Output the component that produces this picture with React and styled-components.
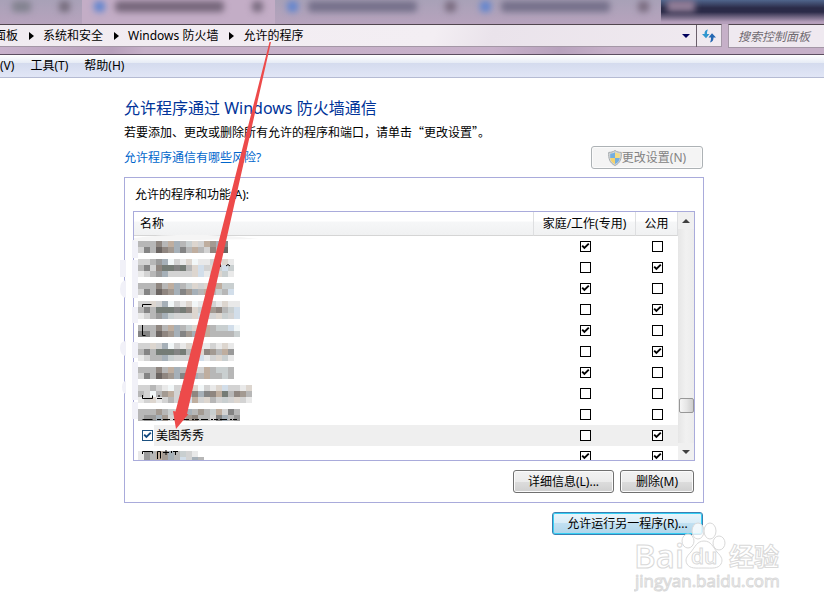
import React, { useState } from 'react';
import styled, { createGlobalStyle } from 'styled-components';

const GlobalStyle = createGlobalStyle`
  * {
    box-sizing: border-box;
  }

  body {
    margin: 0;
    background: #ffffff;
    color: #000000;
    font-family: 'Noto Sans', 'Noto Sans CJK SC', sans-serif;
    font-size: 12px;
    line-height: 18px;
  }

  button,
  input {
    font: inherit;
  }
`;

const Page = styled.div`
  position: relative;
  min-height: 100vh;
  overflow: hidden;
`;

const TabStrip = styled.div`
  display: flex;
  height: 24px;
  overflow: hidden;
  background: linear-gradient(#50658c 0, #2b2b48 8px, #2b2b48 12px, #b59fbb 22px);
`;

const BrowserTab = styled.div`
  display: flex;
  flex: none;
  align-items: center;
  width: ${(props) => (props.$first ? '82px' : '193px')};
  height: 24px;
  padding: 0 12px 12px;
  gap: 10px;
  background: linear-gradient(
    ${(props) => (props.$active ? '#c3adc6' : '#a8a1b7')},
    ${(props) => (props.$active ? '#c3adc6' : '#b7a3bd')}
  );
`;

const Smear = styled.span`
  flex: ${(props) => (props.$grow ? '1' : 'none')};
  width: 11px;
  height: 11px;
  margin-right: ${(props) => (props.$grow ? '18px' : '0')};
  border-radius: 4px;
  background: ${(props) => props.$color};
  filter: blur(3px);
`;

const NewTab = styled.div`
  width: 28px;
  height: 12px;
  margin-left: 6px;
  background: #927e98;
  filter: blur(3px);
`;

const AddressRow = styled.header`
  display: flex;
  gap: 6px;
  height: 31px;
  padding-bottom: 7px;
  border-bottom: 1px solid #5c4e60;
  background: linear-gradient(100deg, #c9b2cc 0, #b7a0bb 14%, #c6b0c8 18%, #c8b1ca 60%, #b8a2bd 68%, #c6b0c8 74%);
`;

const AddressBar = styled.nav`
  display: flex;
  flex: 1;
  align-items: center;
  border: 1px solid #a497a6;
  border-top-color: #51464f;
  border-left: none;
  background: linear-gradient(110deg, #f1ebf1, #f3eef3 60%, #eae3eb 68%, #f0eaf0);
`;

const Crumbs = styled.ol`
  display: flex;
  flex: 1;
  align-items: center;
  margin: 0 0 0 -6px;
  padding: 0;
  list-style: none;
`;

const Crumb = styled.li`
  display: flex;
  align-items: center;
  white-space: nowrap;

  & + &::before {
    content: '';
    margin: 0 9px 0 11px;
    border: 4px solid transparent;
    border-left: 5px solid #000000;
    border-right: none;
  }
`;

const CrumbLink = styled.a`
  color: #000000;
  text-decoration: none;
`;

const HistoryButton = styled.button`
  display: flex;
  align-items: center;
  justify-content: center;
  width: 20px;
  height: 22px;
  padding: 0;
  border: none;
  background: transparent;
`;

const RefreshButton = styled(HistoryButton)`
  width: 25px;
  border-left: 1px solid #6b5f6b;
`;

const SearchBox = styled.input`
  width: 96px;
  height: 24px;
  padding: 0 9px;
  border: 1px solid #a497a6;
  border-top-color: #51464f;
  border-right: none;
  border-radius: 0;
  background: #efe9f0;
  font-style: italic;

  &::placeholder {
    color: #6f6a70;
    opacity: 1;
  }
`;

const MenuBar = styled.nav`
  display: flex;
  gap: 16px;
  height: 23px;
  align-items: center;
  border-bottom: 1px solid #b5bbd3;
  background: linear-gradient(#ffffff 0, #e6ebf5 8px, #d4dbee 8px, #e1e6f6 22px);
`;

const MenuItem = styled.button`
  padding: 0;
  border: none;
  background: transparent;
  color: #000000;
`;

const Content = styled.main`
  position: relative;
  padding: 18px 120px 0 124px;
`;

const Title = styled.h1`
  margin: 0;
  color: #003399;
  font-size: 16px;
  font-weight: 400;
  line-height: 24px;
`;

const Description = styled.p`
  margin: 3px 0 5px;
  font-family: 'Noto Sans CJK SC', sans-serif;
`;

const HelpRow = styled.div`
  display: flex;
  align-items: center;
  justify-content: space-between;
  margin-bottom: 8px;
  padding-right: 1px;
`;

const HelpLink = styled.a`
  color: #0066cc;
  text-decoration: none;
`;

const Button = styled.button`
  display: flex;
  align-items: center;
  justify-content: center;
  width: ${(props) => props.$width};
  height: 23px;
  padding: 0;
  border: 1px solid #707070;
  border-radius: 3px;
  background: linear-gradient(#f2f2f2 0, #ebebeb 50%, #dddddd 50%, #cfcfcf 100%);
  box-shadow: inset 0 0 0 1px #fbfbfb;
  color: #000000;
  white-space: nowrap;

  &:disabled {
    border-color: #adb2b5;
    background: #f4f4f4;
    color: #838383;
  }
`;

const DefaultButton = styled(Button)`
  border-color: #3c7fb1;
  background: linear-gradient(#eaf5fb 0, #d8ecf7 50%, #c1e0f1 50%, #b0d6eb 100%);
  box-shadow: inset 0 0 0 1px #35d0f5;
`;

const Panel = styled.section`
  padding: 8px 8px 9px;
  border: 1px solid #a9abdb;
`;

const PanelLabel = styled.div`
  margin-bottom: 7px;
  padding-left: 2px;
`;

const ListBox = styled.div`
  display: flex;
  height: 250px;
  overflow: hidden;
  border: 1px solid #a9abdb;
`;

const ProgramTable = styled.table`
  flex: 1;
  width: 0;
  table-layout: fixed;
  border-collapse: separate;
  border-spacing: 0;
`;

const HeaderCell = styled.th`
  width: ${(props) => props.$width || 'auto'};
  height: 24px;
  padding: ${(props) => (props.$width ? '0' : '0 6px')};
  border-right: 1px solid #dedfe1;
  border-bottom: 1px solid #d5d5d5;
  background: linear-gradient(#ffffff 0, #ffffff 9px, #f6f7f8 10px, #f0f1f2 100%);
  font-weight: 400;
  text-align: ${(props) => (props.$width ? 'center' : 'left')};
  white-space: nowrap;
`;

const Cell = styled.td`
  height: 21px;
  padding: 0;
  background: ${(props) => (props.$selected ? '#efefef' : 'transparent')};
  line-height: 0;
  text-align: center;
`;

const NameCell = styled.div`
  display: flex;
  align-items: center;
  height: 21px;
  padding-left: ${(props) => (props.$masked ? '4px' : '8px')};
  gap: 1px;
`;

const NameLabel = styled.label`
  flex: 1;
  padding-left: 2px;
  background: #efefef;
  line-height: 21px;
  text-align: left;
`;

const CheckBox = styled.input`
  appearance: none;
  width: 11px;
  height: 11px;
  margin: 0;
  border: 1px solid ${(props) => props.$color || '#000000'};
  background: #ffffff;
  vertical-align: top;

  &:checked {
    background: #ffffff
      url("data:image/svg+xml,%3Csvg xmlns='http://www.w3.org/2000/svg' viewBox='0 0 9 9'%3E%3Cpath d='M1.2 3.6 3.4 6 7.8 1.6' fill='none' stroke='${(props) =>
        props.$color ? '%23134a80' : '%23000'}' stroke-width='1.9'/%3E%3C/svg%3E");
  }
`;

const ScrollBar = styled.div`
  display: flex;
  flex-direction: column;
  align-items: center;
  width: 16px;
  background: linear-gradient(90deg, #e6e6e6, #f1f1f1 50%, #ececec);
`;

const ScrollButton = styled.button`
  display: flex;
  align-items: center;
  justify-content: center;
  width: 16px;
  height: 17px;
  padding: 0;
  border: none;
  background: #f0f0f0;
`;

const ScrollSpace = styled.div`
  flex: ${(props) => props.$part};
`;

const ScrollThumb = styled.div`
  width: 15px;
  height: 15px;
  border: 1px solid #979797;
  border-radius: 2px;
  background: linear-gradient(90deg, #f6f6f6, #e6e6e6 50%, #cdcdcd);
`;

const ButtonRow = styled.div`
  display: flex;
  justify-content: flex-end;
  gap: 6px;
  margin-top: 9px;
  padding-right: 1px;
`;

const Annotation = styled.svg`
  position: absolute;
  top: -38px;
  left: 0;
  pointer-events: none;
`;

const Watermark = styled.svg`
  position: absolute;
  top: 443px;
  right: 40px;
  pointer-events: none;
`;

// one letter per 6px block
const blockColors = {
  a: '#d3d3d3',
  b: '#b7b7b7',
  c: '#848484',
  d: '#6b6562',
  e: '#9a9a9a',
  f: '#a6b0b8',
  g: '#bfae9f',
  h: '#ddd6cf',
  i: '#d2deea',
  j: '#757c76',
  k: '#8f8680',
  l: '#c9cfd0',
  m: '#f2f7f8',
  n: '#e9e9e9',
  o: '#a39a92',
};

const programs = [
  { mosaic: ['bbbkbgfblhagofc', 'acbdkofcbgbakbd'], home: true, pub: false },
  { mosaic: ['aabefmanhmnnanhn', 'bcakjjcjbhiahlil', 'nabefaaaahinahln'], home: false, pub: true },
  { mosaic: ['bbbkbgfblhahbgll', 'acbdkofcofbgblbi'], home: true, pub: false },
  { mosaic: ['aahafmanhmnnanhnn', 'bcbjjjcjkhlbokbli', 'nabeflaaahiaahlai'], home: false, pub: true },
  { mosaic: ['bbbkbgfblhagbllim', 'ccbdkofcofbgbbbbl'], home: true, pub: false },
  { mosaic: ['aahafmanhmnnanhn', 'bcbjjjcjblhkobge', 'nabbflaaahinahln'], home: false, pub: true },
  { mosaic: ['bbbkbgfblhagbllb', 'acbdkofcofbgbblb'], home: true, pub: false },
  { mosaic: ['aabanmahnhmanhiaanh', 'bambogaofkfckgjbkob', 'nahnabaaigahbalahan'], home: false, pub: false },
  { mosaic: ['bbboblagfboblgacb', 'beefoabbokbbacfbe'], home: false, pub: false },
  { name: '美图秀秀', home: false, pub: true, selected: true },
  { mosaic: ['nebgofblan', 'nebgofbiafb'], home: true, pub: true },
];

const menus = ['(V)', '工具(T)', '帮助(H)'];
const crumbs = ['面板', '系统和安全', 'Windows 防火墙', '允许的程序'];

const Mosaic = ({ rows }) => {
  const width = Math.max(...rows.map((row) => row.length)) * 6;
  return (
    <svg width={width} height={rows.length * 6} shapeRendering="crispEdges" aria-hidden="true">
      {rows.map((row, y) =>
        row
          .split('')
          .map((key, x) => (
            <rect key={`${x}-${y}`} x={x * 6} y={y * 6} width="6" height="6" fill={blockColors[key]} />
          ))
      )}
    </svg>
  );
};

const Shield = () => (
  <svg width="14" height="16" viewBox="0 0 14 16" aria-hidden="true">
    <path d="M7 .5C5 2 3 2.300.7 2.400.3 8 1.500 13 7 15.500 12.500 13 13.700 8 13.300 2.400 11 2.300 9 2 7 .5Z" fill="#d5d8da" stroke="#a5abae" />
    <path d="M7 2.200C5.500 3.200 4 3.600 2.200 3.700V8H7Z" fill="#74aee0" />
    <path d="M7 2.200c1.500 1 3 1.400 4.800 1.500V8H7Z" fill="#f5dc83" />
    <path d="M2.200 8c.4 2.900 2 4.800 4.800 6V8Z" fill="#f5d36c" />
    <path d="M11.800 8c-.4 2.900-2 4.800-4.800 6V8Z" fill="#74aee0" />
  </svg>
);

const RefreshIcon = () => (
  <svg width="16" height="14" viewBox="0 0 16 14" aria-hidden="true">
    <path d="M7 .5C4.300.8 3.500 2.500 3.500 5H1l4 4.300L8.500 5H6c0-2 .2-3.300 1-4.500Z" fill="#3196cf" />
    <path d="M9 13.500c2.700-.5 3.500-2.500 3.500-5H15L11 4.200 7.500 8.500H10c0 2-.2 3.500-1 5Z" fill="#2467b2" />
  </svg>
);

const Triangle = ({ up, color = '#404040' }) => (
  <svg width="8" height="4" viewBox="0 0 8 4" aria-hidden="true">
    <path d={up ? 'M0 4 4 0l4 4Z' : 'M0 0h8L4 4Z'} fill={color} />
  </svg>
);

const App = () => {
  const [rows, setRows] = useState(programs);

  const toggle = (index, field) => {
    setRows((prev) =>
      prev.map((row, i) => (i === index ? { ...row, [field]: !row[field] } : row))
    );
  };

  return (
    <Page>
      <GlobalStyle />
      <TabStrip aria-hidden="true">
        <BrowserTab $first>
          <Smear $grow $color="#82828f" />
          <Smear $color="#756c7c" />
        </BrowserTab>
        {[true, false, false].map((active, i) => (
          <BrowserTab key={i} $active={active}>
            <Smear $color="#6285cf" />
            <Smear $grow $color={active ? '#75667a' : '#75708a'} />
            <Smear $color="#796b7f" />
          </BrowserTab>
        ))}
        <NewTab />
      </TabStrip>
      <AddressRow>
        <AddressBar>
          <Crumbs>
            {crumbs.map((crumb) => (
              <Crumb key={crumb}>
                <CrumbLink href="#">{crumb}</CrumbLink>
              </Crumb>
            ))}
          </Crumbs>
          <HistoryButton type="button" aria-label="历史记录">
            <Triangle color="#00005c" />
          </HistoryButton>
          <RefreshButton type="button" aria-label="刷新">
            <RefreshIcon />
          </RefreshButton>
        </AddressBar>
        <SearchBox type="text" aria-label="搜索控制面板" placeholder="搜索控制面板" />
      </AddressRow>
      <MenuBar>
        {menus.map((menu) => (
          <MenuItem type="button" key={menu}>
            {menu}
          </MenuItem>
        ))}
      </MenuBar>

      <Content>
        <Title>允许程序通过 Windows 防火墙通信</Title>
        <Description>若要添加、更改或删除所有允许的程序和端口，请单击“更改设置”。</Description>
        <HelpRow>
          <HelpLink href="#">允许程序通信有哪些风险?</HelpLink>
          <Button type="button" $width="112px" disabled>
            <Shield />
            <span>更改设置(N)</span>
          </Button>
        </HelpRow>

        <Panel>
          <PanelLabel id="programs-label">允许的程序和功能(A):</PanelLabel>
          <ListBox>
            <ProgramTable aria-labelledby="programs-label">
              <thead>
                <tr>
                  <HeaderCell>名称</HeaderCell>
                  <HeaderCell $width="102px">家庭/工作(专用)</HeaderCell>
                  <HeaderCell $width="42px">公用</HeaderCell>
                </tr>
              </thead>
              <tbody>
                {rows.map((row, i) => (
                  <tr key={i}>
                    <Cell>
                      <NameCell $masked={!row.name}>
                        {row.name ? (
                          <>
                            <CheckBox type="checkbox" id={`program-${i}`} $color="#1c5180" defaultChecked />
                            <NameLabel htmlFor={`program-${i}`}>{row.name}</NameLabel>
                          </>
                        ) : (
                          <Mosaic rows={row.mosaic} />
                        )}
                      </NameCell>
                    </Cell>
                    <Cell $selected={row.selected}>
                      <CheckBox
                        type="checkbox"
                        aria-label="家庭/工作(专用)"
                        checked={row.home}
                        onChange={() => toggle(i, 'home')}
                      />
                    </Cell>
                    <Cell $selected={row.selected}>
                      <CheckBox
                        type="checkbox"
                        aria-label="公用"
                        checked={row.pub}
                        onChange={() => toggle(i, 'pub')}
                      />
                    </Cell>
                  </tr>
                ))}
              </tbody>
            </ProgramTable>
            <ScrollBar>
              <ScrollButton type="button" aria-label="向上">
                <Triangle up />
              </ScrollButton>
              <ScrollSpace $part={169} />
              <ScrollThumb />
              <ScrollSpace $part={30} />
              <ScrollButton type="button" aria-label="向下">
                <Triangle />
              </ScrollButton>
            </ScrollBar>
          </ListBox>
          <ButtonRow>
            <Button type="button" $width="101px">详细信息(L)...</Button>
            <Button type="button" $width="74px">删除(M)</Button>
          </ButtonRow>
        </Panel>
        <ButtonRow>
          <DefaultButton type="button" $width="151px">允许运行另一程序(R)...</DefaultButton>
        </ButtonRow>

        {/* brush marks beside the names, bits of the masked rows and the red pointer */}
        <Annotation width="300" height="440" viewBox="0 40 300 440" aria-hidden="true">
          <g fill="#f1f1f8">
            <path d="M132 240h6v18h-6ZM132 260h6v38h-6ZM132 307h6v16h-6ZM132 342h6v16h-6ZM132 362h6v38h-6ZM132 402h6v17h-6Z" />
            <path d="M120 260h6v17h-6ZM126 280v18q-6-1-6-9t6-9ZM126 341v15q-6-1-6-8t6-7ZM126 381v13q-4-1-4-7t4-6Z" />
            <path d="M134 238q60-7 125 1l-125 2Z" fill="#f5f5f5" />
          </g>
          <g fill="none" stroke="#000000">
            <path d="M142.500 307v-2.500h9M142.500 325v10.500h3M142.500 395v3.500h10v-3M142.500 419.500h10M142.500 454v-2.500h10v2" />
            <path d="M157 398.500h5M159 395v2" />
            <path d="M157 419.500h80" strokeDasharray="4 2 7 3 2 1" />
            <path d="M157.500 459v-7.500h3v7M163 452.500h6M166 450v5M171.500 451v2M173 451.500h5M175.500 451v4" />
            <path d="M220.500 264v3M226 266q2-3 4 0" />
          </g>
          <path d="M269.500 42h1.500L187 414h1.500L176 429 173 411l2.500.5Z" fill="#ed4a4a" />
        </Annotation>

        <Watermark width="150" height="76" viewBox="0 0 150 76" aria-hidden="true">
          <g fill="#ffffff" fillOpacity="0.8" stroke="#d9d9d9" strokeWidth="1" fontFamily="'Open Sans', 'Noto Sans CJK SC', sans-serif">
            <ellipse cx="54" cy="20" rx="6" ry="7" />
            <ellipse cx="64" cy="10" rx="6" ry="8" />
            <ellipse cx="76" cy="10" rx="6" ry="8" />
            <ellipse cx="85" cy="22" rx="6" ry="7" />
            <path d="M70 20c7 0 9 6 13 11 5 5 6 8 4 12-3 5-9 4-17 4s-14 1-17-4c-2-4-1-7 4-12 4-5 6-11 13-11Z" />
            <text x="0" y="47" fontSize="33" fontWeight="600">Bai</text>
            <text x="57" y="43" fontSize="21" fontWeight="600">du</text>
            <text x="95" y="45" fontSize="25" fontWeight="700">经验</text>
            <text x="1" y="66" fontSize="17">jingyan.baidu.com</text>
          </g>
        </Watermark>
      </Content>
    </Page>
  );
};

export default App;
